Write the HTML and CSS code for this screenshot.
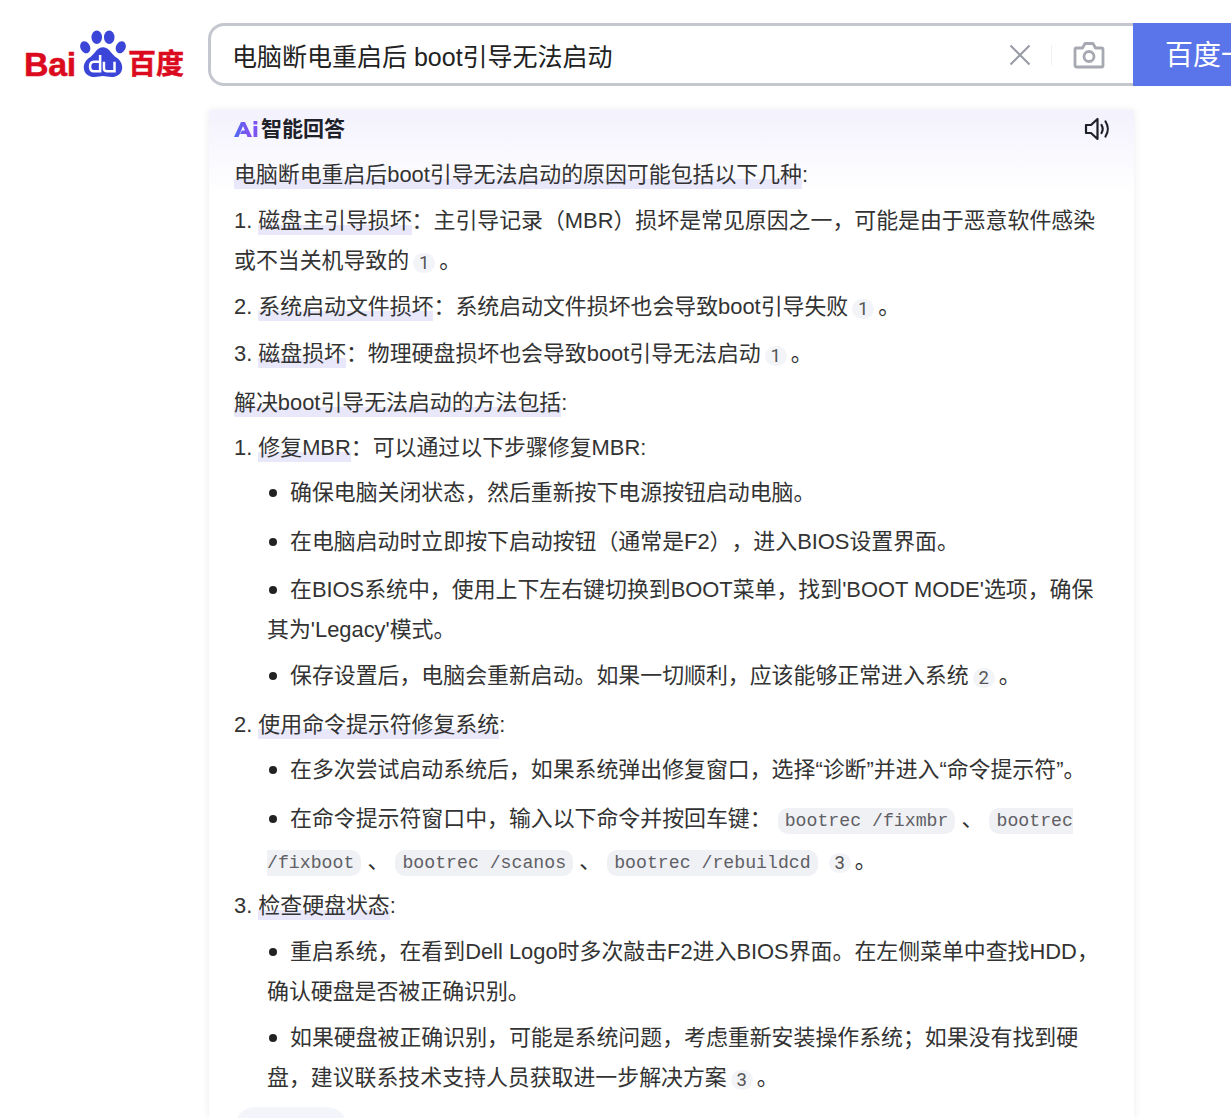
FILE: index.html
```html
<!DOCTYPE html>
<html lang="zh-CN">
<head>
<meta charset="utf-8">
<title>电脑断电重启后 boot引导无法启动</title>
<link rel="stylesheet" href="styles.css">
</head>
<body>
<header class="topbar">
  <a class="logo">
    <span class="logo-bai">Bai</span>
    <svg class="paw" viewBox="0 0 50 50" width="48" height="50" aria-hidden="true">
      <ellipse cx="18.500" cy="7.500" rx="5.500" ry="7" fill="#3b46d8"/>
      <ellipse cx="31.500" cy="7.500" rx="5.500" ry="7" fill="#3b46d8"/>
      <ellipse cx="6.500" cy="18" rx="5" ry="6.500" transform="rotate(-25 6.500 18)" fill="#3b46d8"/>
      <ellipse cx="43.500" cy="18" rx="5" ry="6.500" transform="rotate(25 43.500 18)" fill="#3b46d8"/>
      <path d="M25 18c6 0 8 6 13 10 5 3 7 7 7 11 0 7-6 10-11 10-4 0-6-1-9-1s-5 1-9 1c-5 0-11-3-11-10 0-4 2-8 7-11 5-4 7-10 13-10z" fill="#3b46d8"/>
      <path d="M22 26v17h-6.500c-2.500 0-4-2-4-5s1.500-5 4-5H22M26 33v7c0 2 1.500 3 3.500 3H37V33" fill="none" stroke="#fff" stroke-width="2.600"/>
    </svg>
    <span class="logo-cn">百度</span>
  </a>
  <div class="search">
    <div class="search-box">
      <span class="query">电脑断电重启后 boot引导无法启动</span>
      <svg class="clear" viewBox="0 0 22 22" width="22" height="22" aria-hidden="true"><path d="M1.500 1.500l19 19M20.500 1.500l-19 19" stroke="#9a9da6" stroke-width="2.200" fill="none"/></svg>
      <span class="sep"></span>
      <svg class="camera" viewBox="0 0 32 28" width="32" height="28" aria-hidden="true"><path d="M3.500 7h6l2.500-4.500h8L22.500 7h6c.8 0 1.500.7 1.500 1.500v16c0 .8-.7 1.500-1.500 1.500h-25c-.8 0-1.500-.7-1.500-1.500v-16C2 7.700 2.700 7 3.500 7z" fill="none" stroke="#a6a9b2" stroke-width="2.800" stroke-linejoin="round"/><circle cx="16" cy="15.500" r="5" fill="none" stroke="#a6a9b2" stroke-width="2.800"/></svg>
    </div>
    <div class="search-btn">百度一下</div>
  </div>
</header>

<main class="card">
  <div class="card-head">
    <div class="brand">
      <svg viewBox="0 0 24 18" width="24" height="18" aria-hidden="true"><defs><linearGradient id="g" x1="0" x2="1" y1="0" y2="0"><stop offset="0" stop-color="#4f6bf0"/><stop offset="1" stop-color="#8a4df2"/></linearGradient></defs><path d="M0 17L7 2h4l7 15h-4.500l-1.200-3H6l2-3.500h3L9 6 4.500 17z" fill="url(#g)"/><rect x="19.500" y="6" width="3.800" height="11" fill="#7a55f2"/><rect x="19.500" y="1" width="3.800" height="3.500" fill="#7a55f2"/></svg>
      <strong>智能回答</strong>
    </div>
    <svg class="speaker" viewBox="0 0 28 24" width="28" height="24" aria-hidden="true"><path d="M2 8h5l6.500-6v20L7 16H2z" fill="none" stroke="#1f2129" stroke-width="2.200" stroke-linejoin="round"/><path d="M17.500 8c1.500 2.500 1.500 5.500 0 8M21.500 4.500c3 4.500 3 10.500 0 15" fill="none" stroke="#1f2129" stroke-width="2.200" stroke-linecap="round"/></svg>
  </div>

  <p class="line first"><mark>电脑断电重启后boot引导无法启动的原因可能包括以下几种</mark>:</p>
  <p class="line g6">1. <mark>磁盘主引导损坏</mark>：主引导记录（MBR）损坏是常见原因之一，可能是由于恶意软件感染<br>或不当关机导致的<span class="cite">1</span>。</p>
  <p class="line g6">2. <mark>系统启动文件损坏</mark>：系统启动文件损坏也会导致boot引导失败<span class="cite">1</span>。</p>
  <p class="line g7">3. <mark>磁盘损坏</mark>：物理硬盘损坏也会导致boot引导无法启动<span class="cite">1</span>。</p>
  <p class="line g9"><mark>解决boot引导无法启动的方法包括</mark>:</p>
  <p class="line g5">1. <mark>修复MBR</mark>：可以通过以下步骤修复MBR:</p>
  <p class="line sub g5"><i class="dot"></i>确保电脑关闭状态，然后重新按下电源按钮启动电脑。</p>
  <p class="line sub g9"><i class="dot"></i>在电脑启动时立即按下启动按钮（通常是F2），进入BIOS设置界面。</p>
  <p class="line sub g8"><i class="dot"></i>在BIOS系统中，使用上下左右键切换到BOOT菜单，找到'BOOT MODE'选项，确保<br>其为'Legacy'模式。</p>
  <p class="line sub g6"><i class="dot"></i>保存设置后，电脑会重新启动。如果一切顺利，应该能够正常进入系统<span class="cite">2</span>。</p>
  <p class="line g9">2. <mark>使用命令提示符修复系统</mark>:</p>
  <p class="line sub g5"><i class="dot"></i>在多次尝试启动系统后，如果系统弹出修复窗口，选择“诊断”并进入“命令提示符”。</p>
  <p class="line sub g9"><i class="dot"></i>在命令提示符窗口中，输入以下命令并按回车键： <code>bootrec /fixmbr</code> 、 <code>bootrec<br>/fixboot</code> 、 <code>bootrec /scanos</code> 、 <code>bootrec /rebuildcd</code><span class="cite">3</span>。</p>
  <p class="line g3">3. <mark>检查硬盘状态</mark>:</p>
  <p class="line sub g6"><i class="dot"></i>重启系统，在看到Dell Logo时多次敲击F2进入BIOS界面。在左侧菜单中查找HDD，<br>确认硬盘是否被正确识别。</p>
  <p class="line sub g6"><i class="dot"></i>如果硬盘被正确识别，可能是系统问题，考虑重新安装操作系统；如果没有找到硬<br>盘，建议联系技术支持人员获取进一步解决方案<span class="cite">3</span>。</p>
  <div class="more"></div>
</main>
</body>
</html>
```
FILE: styles.css
```css
* { box-sizing: border-box; }
html, body { margin: 0; padding: 0; }
body {
  width: 1231px;
  height: 1118px;
  overflow: hidden;
  background: #fff;
  color: #333;
  font-family: "Liberation Sans", "Noto Sans CJK SC", sans-serif;
  text-spacing-trim: space-all;
}
.topbar {
  display: flex;
  align-items: flex-start;
  height: 110px;
  padding-top: 23px;
}
.logo {
  width: 208px;
  padding: 6px 0 0 24px;
  display: flex;
  align-items: flex-end;
  height: 56px;
  color: #dc0a1e;
  font-weight: 700;
}
.logo-bai { font-size: 34px; line-height: 34px; width: 55px; letter-spacing: -.3px; margin-bottom: -2px; -webkit-text-stroke: .5px #dc0a1e; }
.paw { flex: none; }
.logo-cn { font-size: 28px; line-height: 30px; margin-left: 1px; margin-bottom: -1px; white-space: nowrap; -webkit-text-stroke: .5px #dc0a1e; }
.search { display: flex; flex: none; width: 1023px; height: 63px; overflow: hidden; }
.search-box {
  width: 925px;
  height: 63px;
  flex: none;
  display: flex;
  align-items: center;
  padding-left: 21px;
  border: 3px solid #c4c7ce;
  border-right: 0;
  border-radius: 16px 0 0 16px;
}
.query { flex: 1; font-size: 25px; line-height: 30px; padding-top: 4px; color: #222; white-space: nowrap; }
.clear { margin-right: 20px; }
.sep { width: 1px; height: 20px; background: #eeeff2; margin-right: 21px; }
.camera { margin-right: 28px; }
.search-btn {
  flex: none;
  width: 130px;
  height: 63px;
  padding-left: 32px;
  background: #5a74ea;
  color: #fff;
  font-size: 28px;
  line-height: 66px;
  white-space: nowrap;
}
.card {
  width: 925px;
  height: 1008px;
  margin-left: 209px;
  padding: 0 25px;
  background: linear-gradient(#f3f2fd 0, #fff 85px);
  box-shadow: 0 0 8px rgba(30, 30, 60, .08);
  font-size: 21.900px;
}
.card-head {
  display: flex;
  align-items: center;
  justify-content: space-between;
  height: 38px;
}
.brand { display: flex; align-items: center; gap: 3px; }
.brand strong { font-size: 21px; font-weight: 700; color: #1f2129; line-height: 38px; }
.speaker { margin-right: -3px; }
.line { margin: 0; line-height: 40px; white-space: nowrap; color: #333; }
.first { margin-top: 7px; }
.g3 { margin-top: 3px; }
.g5 { margin-top: 5px; }
.g6 { margin-top: 6px; }
.g7 { margin-top: 7px; }
.g8 { margin-top: 8px; }
.g9 { margin-top: 9px; }
.sub { padding-left: 33px; }
mark { background: linear-gradient(transparent 62%, #e9e8fb 62%); color: inherit; padding: 0 0 2px; }
.dot {
  display: inline-block;
  width: 8px;
  height: 8px;
  border-radius: 50%;
  background: #222;
  margin: 0 13px 3px 2px;
  vertical-align: middle;
}
.cite {
  display: inline-block;
  width: 22px;
  height: 20px;
  margin: 0 4px;
  border-radius: 10px;
  background: #f3f4f8;
  font-family: Roboto, "Liberation Sans", sans-serif;
  font-size: 18.500px;
  line-height: 20px;
  text-align: center;
  vertical-align: -1px;
  color: #555;
}
code {
  font-family: "Liberation Mono", monospace;
  font-size: 18.200px;
  padding: 3px 7px;
  background: #f0f1f4;
  border-radius: 10px;
  color: #5f6066;
}
code + .cite { margin-left: 11px; }
.more {
  width: 112px;
  height: 40px;
  margin: 9px 0 0 1px;
  border-radius: 20px;
  background: #f4f5fa;
}
```
